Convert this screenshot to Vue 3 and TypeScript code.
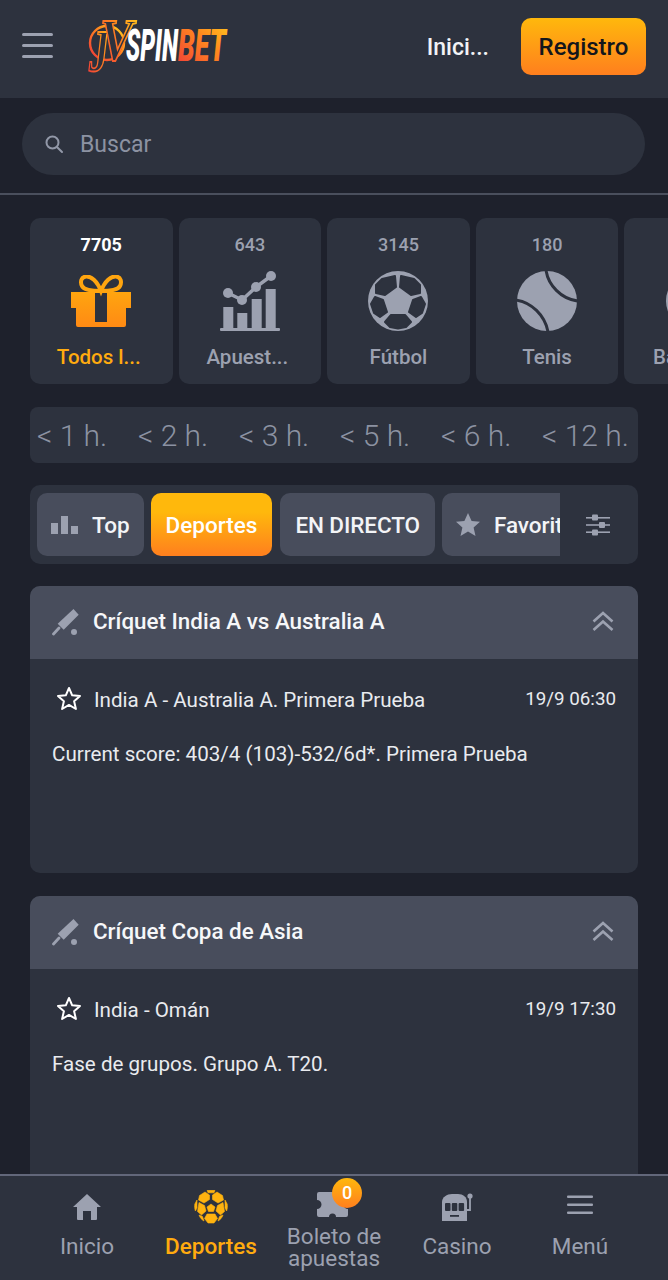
<template>
  <div class="page">
    <header class="topbar">
      <button class="burger" aria-label="Menu"><span></span><span></span><span></span></button>
      <svg class="logo" viewBox="0 0 145 60" width="145" height="60">
        <defs>
          <linearGradient id="betGrad" x1="0" y1="1" x2="1" y2="0">
            <stop offset="0" stop-color="#f0383a" />
            <stop offset="0.6" stop-color="#ff8a1e" />
            <stop offset="1" stop-color="#ffc81e" />
          </linearGradient>
          <linearGradient id="jvGrad" x1="0" y1="1" x2="1" y2="0">
            <stop offset="0" stop-color="#f0343c" />
            <stop offset="0.6" stop-color="#ff8a1e" />
            <stop offset="1" stop-color="#ffd21e" />
          </linearGradient>
        </defs>
        <circle cx="21" cy="26" r="17" fill="none" stroke="url(#jvGrad)" stroke-width="2.4" />
        <text x="3" y="54" class="logo-j" fill="#2d323e" stroke="url(#jvGrad)" stroke-width="1.8" textLength="20" lengthAdjust="spacingAndGlyphs">J</text>
        <text x="14" y="43" class="logo-v" fill="#2d323e" stroke="url(#jvGrad)" stroke-width="1.8" textLength="33" lengthAdjust="spacingAndGlyphs">V</text>
        <text x="40" y="44" class="logo-word" fill="#fff" textLength="52" lengthAdjust="spacingAndGlyphs">SPIN</text>
        <text x="92" y="44" class="logo-word" fill="url(#betGrad)" textLength="48" lengthAdjust="spacingAndGlyphs">BET</text>
      </svg>
      <span class="login">Inici...</span>
      <button class="register">Registro</button>
    </header>

    <main class="content">
      <div class="search-wrap">
        <div class="search">
          <svg width="20" height="20" viewBox="0 0 20 20" fill="none" stroke="#9298a8" stroke-width="2" stroke-linecap="round">
            <circle cx="8.5" cy="8.5" r="6" />
            <path d="M13.2 13.2 18 18" />
          </svg>
          <span>Buscar</span>
        </div>
      </div>

      <div class="sports">
        <div v-for="s in sports" :key="s.name" class="sport" :class="{ active: s.active }">
          <div class="sport-count">{{ s.count }}</div>
          <div class="sport-icon">
            <svg v-if="s.icon === 'gift'" width="60" height="52" viewBox="0 0 60 52">
              <defs>
                <linearGradient id="giftGrad" x1="0" y1="0" x2="0" y2="1">
                  <stop offset="0" stop-color="#ffa50f" />
                  <stop offset="1" stop-color="#ff8a14" />
                </linearGradient>
              </defs>
              <path
                d="M30 16 C26 6 20 1 15 1.500 C10 2 9 7 11 11 C13 15 20 16 30 16 C40 16 47 15 49 11 C51 7 50 2 45 1.500 C40 1 34 6 30 16Z"
                fill="none"
                stroke="#ffa50f"
                stroke-width="4"
              />
              <path
                fill-rule="evenodd"
                fill="url(#giftGrad)"
                d="M0 17H60V33H55V50a2 2 0 0 1-2 2H7a2 2 0 0 1-2-2V33H0Z M24 18V47H36V18Z"
              />
            </svg>
            <svg v-else-if="s.icon === 'chart'" width="60" height="60" viewBox="0 0 60 60" fill="#9ca1b0">
              <rect x="3.300" y="36" width="10" height="22" />
              <rect x="17.300" y="42" width="10" height="16" />
              <rect x="31.700" y="28" width="10" height="30" />
              <rect x="45.700" y="18" width="10" height="40" />
              <rect x="0" y="57" width="60" height="3" rx="1" />
              <path d="M8 22 22 29 36 16 51 5" fill="none" stroke="#9ca1b0" stroke-width="3.500" />
              <circle cx="8" cy="22" r="5" />
              <circle cx="22" cy="29" r="5" />
              <circle cx="36" cy="16" r="5" />
              <circle cx="51" cy="5" r="5" />
            </svg>
            <svg v-else-if="s.icon === 'ball'" width="60" height="60" viewBox="0 0 60 60">
              <circle cx="30" cy="30" r="30" fill="#9ca1b0" />
              <g fill="#2d323e" stroke="#2d323e" stroke-width="2" stroke-linejoin="round">
                <path d="M14 8 27 5 28 16 17 24 8 22 8 14Z" />
                <path d="M46 8 33 5 32 16 43 24 52 22 52 14Z" />
                <path d="M7 26 15 29 19 41 12 46 6 42 3 33Z" />
                <path d="M53 26 45 29 41 41 48 46 54 42 57 33Z" />
                <path d="M23 44 37 44 43 51 38 56 30 57.500 22 56 17 51Z" />
              </g>
            </svg>
            <svg v-else-if="s.icon === 'tennis'" width="60" height="60" viewBox="0 0 60 60">
              <circle cx="30" cy="30" r="30" fill="#9ca1b0" />
              <path d="M29-1 C31 14 44 28 61 30 M-1 29 C14 31 28 44 31 61" fill="none" stroke="#2d323e" stroke-width="3" />
            </svg>
            <svg v-else width="60" height="60" viewBox="0 0 60 60">
              <circle cx="30" cy="30" r="30" fill="#9ca1b0" />
            </svg>
          </div>
          <div class="sport-name" :class="{ cut: s.name.endsWith('...') }">{{ s.name }}</div>
        </div>
      </div>

      <div class="hours">
        <span v-for="h in hours" :key="h">{{ h }}</span>
      </div>

      <div class="tabs">
        <div class="tabs-row">
          <div class="tab">
            <svg width="27" height="18" viewBox="0 0 27 18" fill="#9ca1b0">
              <rect x="0" y="7" width="7" height="11" />
              <rect x="10" y="0" width="7" height="18" />
              <rect x="20" y="10" width="7" height="8" />
            </svg>
            Top
          </div>
          <div class="tab on">Deportes</div>
          <div class="tab wide">EN DIRECTO</div>
          <div class="tab">
            <svg width="24" height="23" viewBox="0 0 24 23" fill="#9ca1b0">
              <path d="M12 0 15.600 8 24 8.800 17.600 14.400 19.500 23 12 18.500 4.500 23 6.400 14.400 0 8.800 8.400 8Z" />
            </svg>
            Favoritos
          </div>
        </div>
        <div class="filter">
          <svg width="24" height="22" viewBox="0 0 24 22" fill="#9ca1b0">
            <rect x="0" y="3" width="24" height="1.600" />
            <rect x="0" y="10.200" width="24" height="1.600" />
            <rect x="0" y="17.400" width="24" height="1.600" />
            <rect x="6" y="0.500" width="6" height="6" rx="1" />
            <rect x="13" y="8" width="6" height="6" rx="1" />
            <rect x="6" y="15.500" width="6" height="6" rx="1" />
          </svg>
        </div>
      </div>

      <section v-for="m in matches" :key="m.title" class="card">
        <div class="card-head">
          <svg width="28" height="28" viewBox="0 0 28 28" fill="#9ca1b0">
            <path d="M21.500 0 26.700 5.700 11.700 20.700 5.700 14.700Z" />
            <path d="M7 19 1.500 25" stroke="#9ca1b0" stroke-width="2.800" stroke-linecap="round" />
            <circle cx="22" cy="23" r="3" />
          </svg>
          <h2>{{ m.title }}</h2>
          <svg class="chevrons" width="22" height="20" viewBox="0 0 22 20" fill="none" stroke="#9ca1b0" stroke-width="2.600">
            <path d="M1.500 10.500 11 2 20.500 10.500" />
            <path d="M1.500 19 11 10.500 20.500 19" />
          </svg>
        </div>
        <div class="card-body">
          <div class="match-row">
            <svg width="26" height="25" viewBox="0 0 26 25" fill="none" stroke="#fff" stroke-width="2" stroke-linejoin="round">
              <path d="M13 2 16.200 9.300 24 10 18.100 15.200 19.900 23 13 18.900 6.100 23 7.900 15.200 2 10 9.800 9.300Z" />
            </svg>
            <span class="match-name">{{ m.name }}</span>
            <span class="match-date">{{ m.date }}</span>
          </div>
          <p class="match-note">{{ m.note }}</p>
        </div>
      </section>
    </main>

    <nav class="bottom">
      <div class="nav-item">
        <div class="nav-icon">
          <svg width="28" height="28" viewBox="0 0 28 28" fill="#9ca1b0">
            <path d="M14 1 28 14H24V26a1 1 0 0 1-1 1H18V18H10V27H5a1 1 0 0 1-1-1V14H0Z" />
          </svg>
        </div>
        <span>Inicio</span>
      </div>
      <div class="nav-item active">
        <div class="nav-icon">
          <svg width="34" height="34" viewBox="0 0 34 34" fill="#ffb30f" stroke="#ffb30f" stroke-width="0.600" stroke-linejoin="round">
            <path d="M17 14 21 17 19.500 21.500 14.500 21.500 13 17Z" />
            <path d="M13 .6 C15 .2 19 .2 21 .6 L20 2.800 H14Z" />
            <path d="M11 2 15.500 5 15.500 9.500 10 13 4.500 10 5.500 5.500Z" />
            <path d="M23 2 18.500 5 18.500 9.500 24 13 29.500 10 28.500 5.500Z" />
            <path d="M3 10 .8 14 C.4 16 .6 19 1.400 21 L3 18Z" />
            <path d="M31 10 33.200 14 C33.600 16 33.400 19 32.600 21 L31 18Z" />
            <path d="M5 12.500 10.500 15.500 12 21 7.500 25 3.500 21.500Z" />
            <path d="M29 12.500 23.500 15.500 22 21 26.500 25 30.500 21.500Z" />
            <path d="M13 24 H21 L23.500 28.500 20 33 H14 L10.500 28.500Z" />
            <path d="M5 25 8.500 26.500 10 31 C8 30 6 28 5 25Z" />
            <path d="M29 25 25.500 26.500 24 31 C26 30 28 28 29 25Z" />
          </svg>
        </div>
        <span>Deportes</span>
      </div>
      <div class="nav-item ticket">
        <div class="nav-icon">
          <svg width="31" height="25" viewBox="0 0 31 25" fill="#9ca1b0">
            <path d="M2 0H29a2 2 0 0 1 2 2V8a4.500 4.500 0 0 0 0 9V23a2 2 0 0 1-2 2H19a3.500 3.500 0 0 0-7 0H2a2 2 0 0 1-2-2V17a4.500 4.500 0 0 0 0-9V2a2 2 0 0 1 2-2Z" />
          </svg>
          <b class="badge">0</b>
        </div>
        <span>Boleto de<br />apuestas</span>
      </div>
      <div class="nav-item casino">
        <div class="nav-icon">
          <svg width="32" height="30" viewBox="0 0 32 30" fill="#9ca1b0">
            <path d="M1 29V10C1 5 6 2 11 2H17C22 2 26 5 26 10V29Z" />
            <path d="M26 18H29V5" fill="none" stroke="#9ca1b0" stroke-width="1.800" />
            <circle cx="29" cy="4" r="2.600" />
            <rect x="4" y="11" width="5.500" height="8" rx="1" fill="#2d323e" />
            <rect x="10.800" y="11" width="5.500" height="8" rx="1" fill="#2d323e" />
            <rect x="17.600" y="11" width="5.500" height="8" rx="1" fill="#2d323e" />
            <rect x="9" y="23" width="9" height="1.800" fill="#2d323e" />
          </svg>
        </div>
        <span>Casino</span>
      </div>
      <div class="nav-item">
        <div class="nav-icon">
          <svg width="26" height="24" viewBox="0 0 26 24" fill="#9ca1b0">
            <rect y="0.500" width="26" height="2.600" rx="1" />
            <rect y="8.500" width="26" height="2.600" rx="1" />
            <rect y="16.500" width="26" height="2.600" rx="1" />
          </svg>
        </div>
        <span>Menú</span>
      </div>
    </nav>
  </div>
</template>

<script setup lang="ts">
  interface Sport {
    count: number;
    name: string;
    icon: string;
    active?: boolean;
  }

  const sports: Sport[] = [
    { count: 7705, name: 'Todos l...', icon: 'gift', active: true },
    { count: 643, name: 'Apuest...', icon: 'chart' },
    { count: 3145, name: 'Fútbol', icon: 'ball' },
    { count: 180, name: 'Tenis', icon: 'tennis' },
    { count: 92, name: 'Balonc...', icon: 'basket' },
  ];

  const hours = ['< 1 h.', '< 2 h.', '< 3 h.', '< 5 h.', '< 6 h.', '< 12 h.'];

  const matches = [
    {
      title: 'Críquet India A vs Australia A',
      name: 'India A - Australia A. Primera Prueba',
      date: '19/9 06:30',
      note: 'Current score: 403/4 (103)-532/6d*. Primera Prueba',
    },
    {
      title: 'Críquet Copa de Asia',
      name: 'India - Omán',
      date: '19/9 17:30',
      note: 'Fase de grupos. Grupo A. T20.',
    },
  ];
</script>

<style scoped>
  .page {
    width: 668px;
    height: 1280px;
    display: flex;
    flex-direction: column;
    overflow: hidden;
    background: #1e212c;
    font-family: Roboto, 'Liberation Sans', sans-serif;
    color: #fff;
  }

  .topbar {
    height: 98px;
    flex: none;
    display: flex;
    align-items: center;
    padding: 0 22px;
    background: #2d323e;
  }

  .burger {
    width: 31px;
    flex: none;
    display: flex;
    flex-direction: column;
    gap: 8px;
    padding: 0;
    border: 0;
    background: none;
    margin-top: -7px;
  }

  .burger span {
    height: 3px;
    border-radius: 2px;
    background: #9ca1b0;
  }

  .logo {
    flex: none;
    margin: -4px 0 0 33px;
    overflow: visible;
  }

  .logo-j {
    font: italic 700 60px 'Liberation Serif', serif;
  }

  .logo-v {
    font: italic 700 60px 'Liberation Serif', serif;
  }

  .logo-word {
    font: italic 900 44px Roboto, 'Liberation Sans', sans-serif;
  }

  .login {
    margin: -4px 0 0 auto;
    font-size: 23px;
    font-weight: 500;
    color: #f2f3f6;
  }

  .register {
    width: 125px;
    height: 57px;
    margin: -5px 0 0 32px;
    border: 0;
    border-radius: 10px;
    background: linear-gradient(#ffb80c, #ff7f1e);
    font: 500 24px Roboto, 'Liberation Sans', sans-serif;
    color: #14161c;
  }

  .content {
    flex: 1;
    min-height: 0;
    overflow: hidden;
  }

  .search-wrap {
    padding: 15px 23px 18px 22px;
    border-bottom: 2px solid #4a4f5d;
  }

  .search {
    height: 62px;
    display: flex;
    align-items: center;
    gap: 16px;
    padding-left: 22px;
    border-radius: 31px;
    background: #2d323e;
    font-size: 23px;
    color: #8c92a2;
  }

  .sports {
    display: flex;
    gap: 6.100px;
    margin: 23px 0 0 30px;
    width: 638px;
    overflow: hidden;
  }

  .sport {
    width: 142.500px;
    height: 166px;
    flex: none;
    padding-top: 16px;
    box-sizing: border-box;
    border-radius: 10px;
    background: #2d323e;
    text-align: center;
    color: #9ca1b0;
    font-weight: 500;
    overflow: hidden;
  }

  .sport-count {
    font-size: 18px;
    line-height: 21px;
  }

  .sport.active .sport-count {
    color: #fff;
    font-weight: 700;
  }

  .sport-icon {
    height: 60px;
    margin-top: 16px;
    display: flex;
    align-items: center;
    justify-content: center;
  }

  .sport-name {
    margin-top: 14px;
    font-size: 20.500px;
    line-height: 24px;
    white-space: nowrap;
  }

  .sport-name.cut {
    padding-right: 5px;
  }

  .sport.active .sport-name {
    color: #ffab0f;
  }

  .hours {
    display: flex;
    justify-content: space-between;
    width: 608px;
    height: 56px;
    box-sizing: border-box;
    margin: 23px 0 0 30px;
    padding: 0 9px 0 7px;
    align-items: center;
    border-radius: 8px;
    background: #2d323e;
    font-size: 30px;
    font-weight: 300;
    color: #8c92a2;
  }

  .tabs {
    display: flex;
    width: 608px;
    height: 79px;
    box-sizing: border-box;
    margin: 22px 0 0 30px;
    padding: 8px 0 8px 7px;
    border-radius: 10px;
    background: #2d323e;
  }

  .tabs-row {
    width: 523px;
    display: flex;
    gap: 7px;
    overflow: hidden;
  }

  .tab {
    height: 63px;
    flex: none;
    display: flex;
    align-items: center;
    gap: 14px;
    padding: 0 14px;
    border-radius: 10px;
    background: #484d5c;
    font-size: 22.500px;
    font-weight: 500;
    white-space: nowrap;
    color: #f3f4f7;
  }

  .tab.on {
    padding: 0 15px;
    background: linear-gradient(#ffb80c 30%, #ff7f1e);
    color: #fff;
  }

  .tab.wide {
    padding: 0 15px;
    margin-left: 1px;
    letter-spacing: -0.100px;
  }

  .filter {
    flex: 1;
    display: flex;
    align-items: center;
    justify-content: center;
    padding-right: 3px;
  }

  .card {
    width: 608px;
    height: 287px;
    margin: 22px 0 0 30px;
    border-radius: 10px;
    background: #2d323e;
    overflow: hidden;
  }

  .card + .card {
    margin-top: 23px;
  }

  .card-head {
    height: 73px;
    display: flex;
    align-items: center;
    gap: 13px;
    padding: 0 24px 0 22px;
    background: #484d5c;
  }

  .card-head h2 {
    margin: 0 0 3px;
    flex: 1;
    font-size: 22.400px;
    font-weight: 500;
    color: #f6f7f9;
  }

  .chevrons {
    margin-bottom: 4px;
  }

  .card-body {
    padding: 26px 22px 0;
  }

  .match-row {
    display: flex;
    align-items: center;
    padding-left: 4px;
  }

  .match-name {
    margin-left: 12px;
    padding-top: 3px;
    flex: 1;
    font-size: 20.600px;
    color: #e9ebef;
  }

  .match-date {
    font-size: 18.800px;
    color: #e9ebef;
  }

  .match-note {
    margin: 29px 0 0;
    font-size: 20.600px;
    line-height: 26px;
    color: #e9ebef;
  }

  .bottom {
    height: 106px;
    flex: none;
    box-sizing: border-box;
    display: grid;
    grid-template-columns: 150px 124px 122px 122px 150px;
    padding-top: 13px;
    border-top: 2px solid #62677a;
    background: #2d323e;
    color: #9ca1b0;
  }

  .nav-item {
    display: flex;
    flex-direction: column;
    align-items: center;
    text-align: center;
    font-size: 22.500px;
    line-height: 22px;
    padding-left: 24px;
  }

  .nav-item:nth-child(2),
  .nav-item:nth-child(3),
  .nav-item:nth-child(4) {
    padding-left: 0;
  }

  .nav-item:last-child {
    padding-right: 26px;
    padding-left: 0;
  }

  .nav-item.active {
    color: #ffab0f;
    font-weight: 500;
    padding-right: 2px;
  }

  .nav-icon {
    position: relative;
    height: 36px;
    margin-bottom: 10px;
    display: flex;
    align-items: center;
  }

  .ticket .nav-icon {
    margin: -3px 0 3px -3px;
  }

  .ticket {
    margin-left: -2px;
  }

  .ticket span {
    line-height: 22px;
  }

  .badge {
    position: absolute;
    top: -8px;
    right: -14px;
    width: 30px;
    height: 30px;
    border-radius: 50%;
    background: linear-gradient(#ffb80c, #ff7f1e);
    color: #fff;
    font-size: 18px;
    font-weight: 500;
    line-height: 30px;
    text-align: center;
  }
</style>
